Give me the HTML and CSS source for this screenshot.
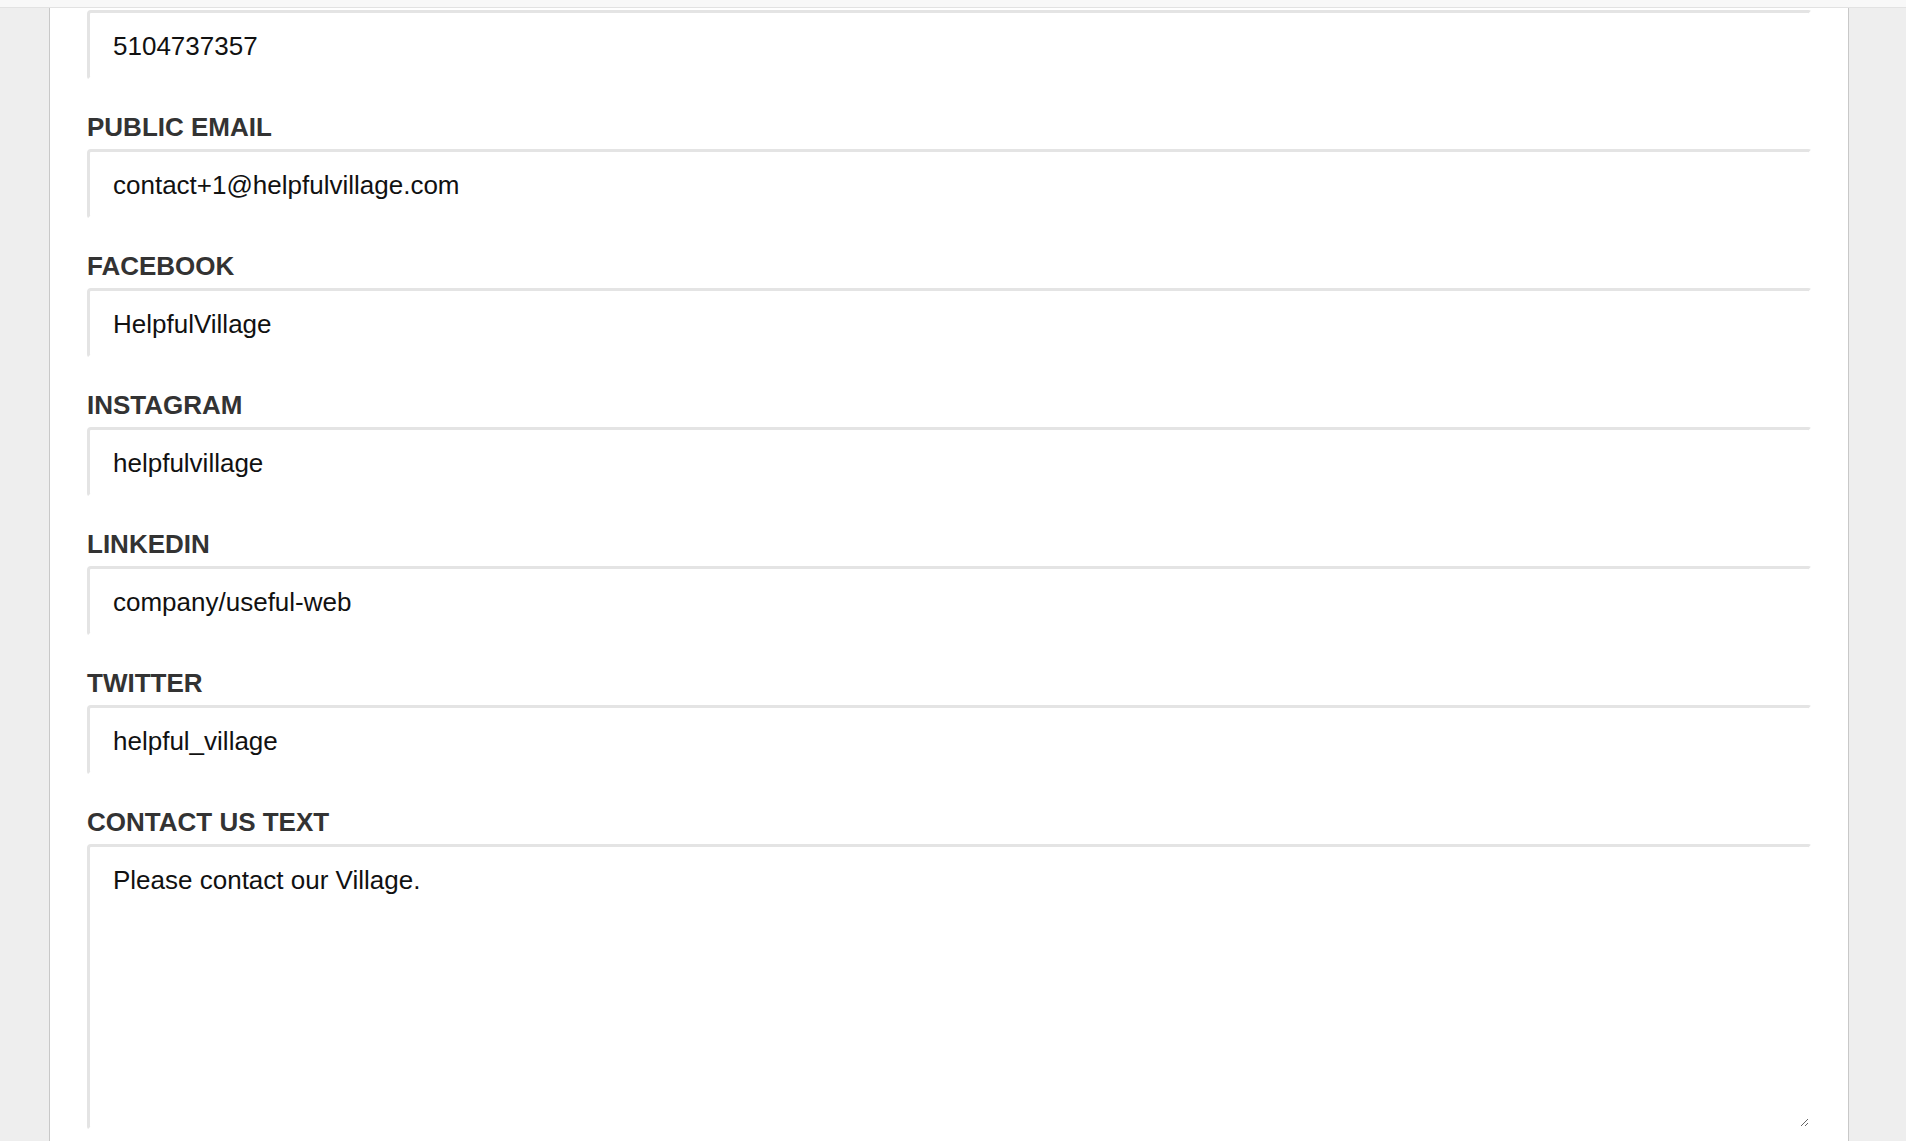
FILE: index.html
```html
<!DOCTYPE html>
<html lang="en">
<head>
    <meta charset="UTF-8">
    <meta name="viewport" content="width=device-width, initial-scale=1.0">
    <title>Village Settings</title>
    <link rel="stylesheet" href="styles.css">
</head>
<body>

<div class="topbar"></div>

<div class="panel">
    <form class="settings-form">
        <input type="text" class="field" value="5104737357">

        <label class="field-label" for="email">Public Email</label>
        <input type="text" class="field" id="email" value="contact+1@helpfulvillage.com">

        <label class="field-label" for="facebook">Facebook</label>
        <input type="text" class="field" id="facebook" value="HelpfulVillage">

        <label class="field-label" for="instagram">Instagram</label>
        <input type="text" class="field" id="instagram" value="helpfulvillage">

        <label class="field-label" for="linkedin">LinkedIn</label>
        <input type="text" class="field" id="linkedin" value="company/useful-web">

        <label class="field-label" for="twitter">Twitter</label>
        <input type="text" class="field" id="twitter" value="helpful_village">

        <label class="field-label" for="contact">Contact Us Text</label>
        <textarea class="field field-area" id="contact">Please contact our Village.</textarea>
    </form>
</div>

</body>
</html>
```

FILE: styles.css
```css
body {
    font-family: "Liberation Sans", Arial, sans-serif;
    background-color: #eeeeee;
    margin: 0;
}

.topbar {
    height: 7px;
    background-color: #f8f8f8;
    border-bottom: 1px solid #e2e2e2;
}

.panel {
    width: 1800px;
    box-sizing: border-box;
    margin-left: 49px;
    padding: 2px 36px 40px 37px;
    background-color: #fff;
    border-left: 1px solid #c8c8c8;
    border-right: 1px solid #c8c8c8;
}

.settings-form {
    display: flex;
    flex-direction: column;
}

.field-label {
    display: block;
    margin: 32px 0 7px 0;
    font-size: 26px;
    line-height: 30px;
    font-weight: bold;
    text-transform: uppercase;
    color: #333;
}

.field {
    box-sizing: border-box;
    width: 100%;
    height: 70px;
    padding: 18px 24px 16px 23px;
    font-family: "Liberation Sans", Arial, sans-serif;
    font-size: 26px;
    line-height: 30px;
    color: #111;
    background-color: #fff;
    border: 3px solid;
    border-color: #e4e4e4 #fff #fff #e4e4e4; /* only top and left show */
    border-radius: 4px;
    outline: none;
}

.field-area {
    height: 286px;
    resize: vertical;
}
```
